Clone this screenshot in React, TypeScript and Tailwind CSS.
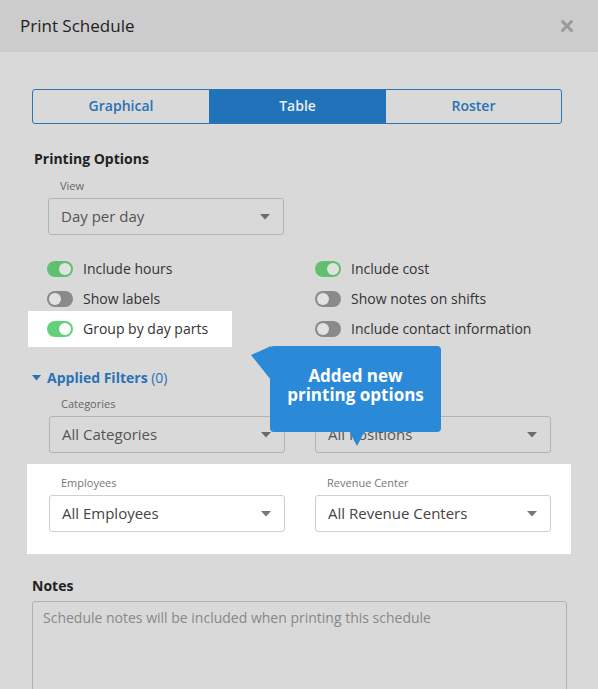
import { X } from 'lucide-react';

function Toggle({ on, bright }: { on: boolean; bright?: boolean }) {
  const track = on ? (bright ? 'bg-[#62d27a]' : 'bg-[#5fc170]') : 'bg-[#8a8a8a]';
  return (
    <span className={`relative inline-flex h-[16px] w-[26px] shrink-0 items-center rounded-full ${track}`}>
      <span
        className={`absolute top-[2px] h-[12px] w-[12px] rounded-full ${bright ? 'bg-white' : 'bg-[#e2e2e2]'} ${on ? 'left-[12px]' : 'left-[2px]'}`}
      />
    </span>
  );
}

function OptionRow({ on, label, bright }: { on: boolean; label: string; bright?: boolean }) {
  return (
    <div className="flex h-[30px] items-center gap-[10px]">
      <Toggle on={on} bright={bright} />
      <span className="pb-[2px] text-[14px] text-[#333]">{label}</span>
    </div>
  );
}

function Select({ label, value, bright }: { label: string; value: string; bright?: boolean }) {
  return (
    <div className="flex flex-col">
      <span className={`mb-[4px] pl-[12px] text-[11px] leading-[16px] ${bright ? 'text-[#777]' : 'text-[#666]'}`}>{label}</span>
      <div
        className={`flex h-[37px] w-[236px] items-center justify-between rounded-[3px] border px-[12px] ${bright ? 'border-[#cfcfcf] bg-white' : 'border-[#b3b3b3]'}`}
      >
        <span className={`pb-[1px] text-[15px] ${bright ? 'text-[#444]' : 'text-[#555]'}`}>{value}</span>
        <svg width="10" height="6" viewBox="0 0 10 6" className="mr-[1px]">
          <path d="M0 0h10L5 5.5z" fill={bright ? '#777' : '#6a6a6a'} />
        </svg>
      </div>
    </div>
  );
}

export default function App() {
  return (
    <div className="relative h-[689px] w-[598px] overflow-hidden bg-[#d9d9d9] font-['Open_Sans',sans-serif]">
      <header className="flex h-[52px] items-center justify-between bg-[#cccccc] pl-[20px] pr-[22px]">
        <h1 className="text-[17px] text-[#222]">Print Schedule</h1>
        <X className="h-[18px] w-[18px] text-[#9a9a9a]" strokeWidth={4} />
      </header>

      <div className="px-[32px] pt-[37px]">
        <div className="flex h-[35px] w-[530px] overflow-hidden rounded-[3px] border border-[#2b74b8]">
          <div className="flex w-[176px] items-center justify-center pb-[3px] text-[14px] font-semibold text-[#2a72b5]">Graphical</div>
          <div className="flex w-[177px] items-center justify-center bg-[#2172b9] pb-[3px] text-[14px] font-semibold text-[#e8eef5]">Table</div>
          <div className="flex flex-1 items-center justify-center pb-[3px] text-[14px] font-semibold text-[#2a72b5]">Roster</div>
        </div>

        <h2 className="mt-[25px] pl-[2px] text-[14px] font-bold leading-[20px] text-[#222]">Printing Options</h2>

        <div className="mt-[9px] pl-[16px]">
          <Select label="View" value="Day per day" />
        </div>

        <div className="mt-[19px] flex pl-[15px]">
          <div className="flex w-[268px] flex-col">
            <OptionRow on label="Include hours" />
            <OptionRow on={false} label="Show labels" />
            <div className="-ml-[19px] -mt-[3px] flex h-[36px] w-[204px] items-center bg-white pl-[19px]">
              <OptionRow on bright label="Group by day parts" />
            </div>
          </div>
          <div className="flex flex-col">
            <OptionRow on label="Include cost" />
            <OptionRow on={false} label="Show notes on shifts" />
            <OptionRow on={false} label="Include contact information" />
          </div>
        </div>

        <div className="mt-[21px] flex h-[20px] items-center gap-[6px]">
          <svg width="9" height="6" viewBox="0 0 9 6">
            <path d="M0 0h9L4.5 5.5z" fill="#2a72b5" />
          </svg>
          <span className="pb-[2px] text-[14px] font-bold text-[#2a72b5]">
            Applied Filters <span className="font-normal">(0)</span>
          </span>
        </div>

        <div className="mt-[8px] flex gap-[30px] pl-[17px]">
          <Select label="Categories" value="All Categories" />
          <Select label="Positions" value="All Positions" />
        </div>

        <div className="-ml-[5px] mt-[11px] flex w-[544px] gap-[30px] bg-white pb-[22px] pl-[22px] pt-[11px]">
          <Select bright label="Employees" value="All Employees" />
          <Select bright label="Revenue Center" value="All Revenue Centers" />
        </div>

        <h2 className="mt-[22px] text-[14px] font-bold leading-[20px] text-[#222]">Notes</h2>
        <div className="mt-[5px] h-[100px] w-[535px] rounded-[3px] border border-[#b0b0b0] px-[10px] pt-[3px]">
          <span className="text-[14px] text-[#888]">Schedule notes will be included when printing this schedule</span>
        </div>
      </div>

      {/* tooltip */}
      <div className="absolute left-[270px] top-[346px] flex h-[86px] w-[171px] flex-col items-center rounded-[4px] bg-[#2b8ad8] pt-[20px] text-center text-[17px] font-bold leading-[19px] text-white">
        <span>Added new</span>
        <span>printing options</span>
      </div>
      <svg className="absolute left-[251px] top-[346px]" width="22" height="34" viewBox="0 0 22 34">
        <path d="M0 9L20 0v34z" fill="#2b8ad8" />
      </svg>
      <svg className="absolute left-[349px] top-[431px]" width="16" height="16" viewBox="0 0 16 16">
        <path d="M0 0h16L8 15z" fill="#2b8ad8" />
      </svg>
    </div>
  );
}
